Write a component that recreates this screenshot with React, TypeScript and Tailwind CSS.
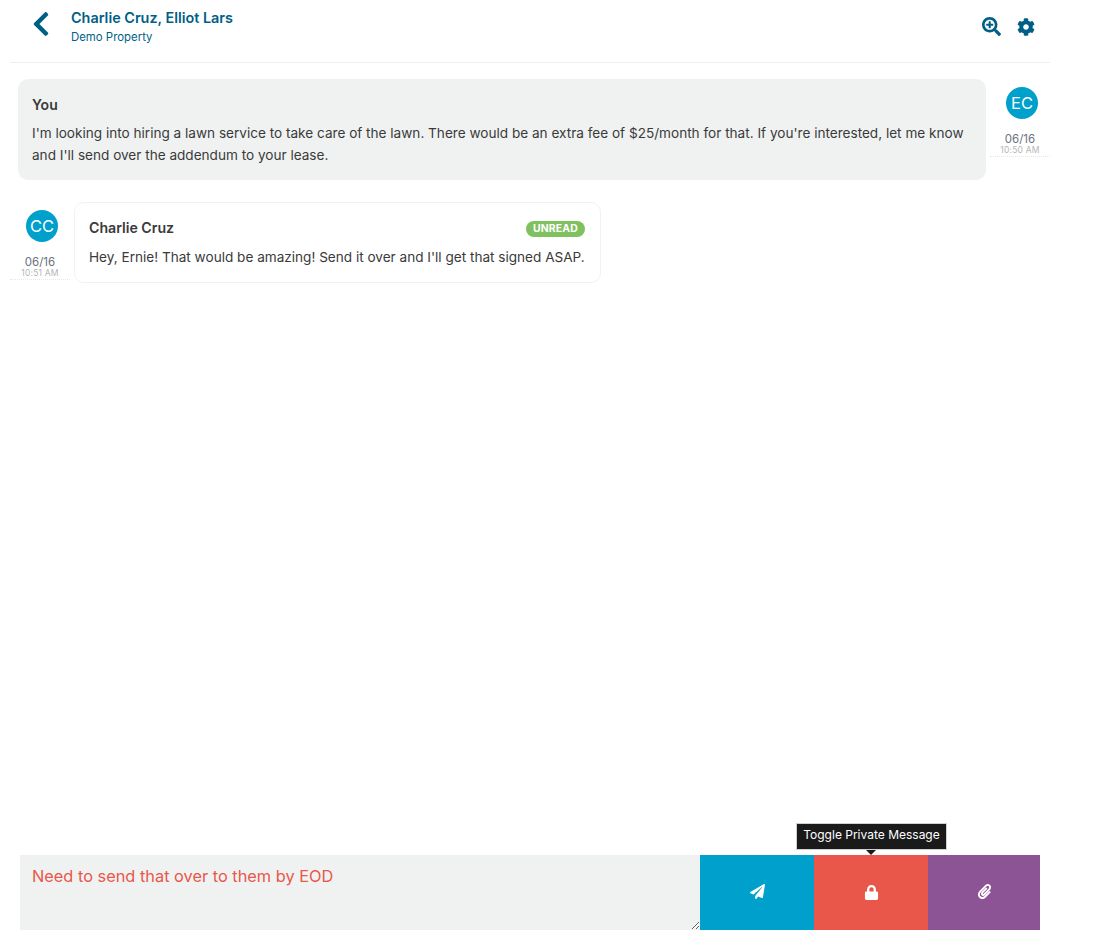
import React from "react";
import {
  FaChevronLeft,
  FaCog,
  FaLock,
  FaPaperclip,
  FaPaperPlane,
  FaSearchPlus,
} from "react-icons/fa";

const Avatar = ({ initials }: { initials: string }) => (
  <div className="w-8 h-8 ml-[4px] rounded-full bg-[#00a0cc] text-white flex items-center justify-center text-[16.5px] leading-none">
    {initials}
  </div>
);

const Stamp = ({ initials, time }: { initials: string; time: string }) => (
  <div className="w-[60px] shrink-0 flex flex-col items-center border-b border-dotted border-[#e8e8e8] h-[70px]">
    <Avatar initials={initials} />
    <p className="mt-[13px] text-[11.5px] leading-[14px] text-[#6b7280]">06/16</p>
    <p className="text-[8.5px] leading-[9px] text-[#b5b5b5] tracking-[0.2px]">{time}</p>
  </div>
);

const App = () => {
  return (
    <div className="w-[1116px] h-[946px] bg-white flex flex-col font-['Inter',sans-serif] text-[#3a3a3a] overflow-hidden">
      {/* HEADER */}
      <div className="w-[1040px] ml-[10px] h-[63px] shrink-0 border-b border-[#eeeeee] flex items-start">
        <div className="w-[61px] pl-[17px] pt-[10px] text-[#005f85]">
          <FaChevronLeft size={28} />
        </div>
        <div className="flex-1 pt-[9px]">
          <p className="text-[14.4px] leading-[17px] font-semibold text-[#005f85]">
            Charlie Cruz, Elliot Lars
          </p>
          <p className="text-[11.4px] leading-[14px] mt-[4px] text-[#005f85]">Demo Property</p>
        </div>
        <div className="flex items-center gap-[16px] pt-[17px] pr-[15px] text-[#005f85]">
          <FaSearchPlus size={19} />
          <FaCog size={18} />
        </div>
      </div>

      {/* MESSAGES */}
      <div className="flex-1 w-[1040px] ml-[10px] pt-[16px] flex flex-col">
        <div className="flex items-start">
          <div className="ml-[8px] w-[968px] h-[101px] bg-[#f0f2f2] rounded-[10px] px-[14px] pt-[17px]">
            <p className="text-[14px] leading-[18px] font-semibold">You</p>
            <p className="text-[13.58px] leading-[22px] mt-[8px]">
              I'm looking into hiring a lawn service to take care of the lawn. There would be an
              extra fee of $25/month for that. If you're interested, let me know and I'll send over
              the addendum to your lease.
            </p>
          </div>
          <div className="ml-[4px] pt-[8px]">
            <Stamp initials="EC" time="10:50 AM" />
          </div>
        </div>

        <div className="flex items-start mt-[22px]">
          <div className="pt-[8px]">
            <Stamp initials="CC" time="10:51 AM" />
          </div>
          <div className="ml-[4px] w-[527px] h-[81px] border border-[#f2f2f2] rounded-[10px] pl-[14px] pr-[15px] pt-[15px]">
            <div className="flex items-center justify-between">
              <p className="text-[14.15px] leading-[20px] font-semibold">Charlie Cruz</p>
              <span className="bg-[#7fc15e] text-white text-[10.4px] leading-[16px] font-bold rounded-full px-[7px] tracking-[0.2px] mt-[1px]">
                UNREAD
              </span>
            </div>
            <p className="text-[13.58px] leading-[22px] mt-[8px]">
              Hey, Ernie! That would be amazing! Send it over and I'll get that signed ASAP.
            </p>
          </div>
        </div>
      </div>

      {/* COMPOSER */}
      <div className="ml-[20px] mb-[16px] w-[1020px] h-[75px] shrink-0 flex">
        <textarea
          className="w-[680px] h-[75px] bg-[#f0f2f2] text-[#e9574a] text-[16.35px] leading-[22px] px-[12px] pt-[10px] outline-none"
          defaultValue="Need to send that over to them by EOD"
        />
        <button className="w-[114px] pb-[2px] bg-[#00a0cc] text-white flex items-center justify-center">
          <FaPaperPlane size={15} />
        </button>
        <button className="relative w-[114px] bg-[#e9574a] text-white flex items-center justify-center">
          <FaLock size={15} />
          <div className="absolute left-[-18px] top-[-32px] w-[151px] h-[27px] bg-[#1a1a1a] border border-[#d0d0d0] text-white text-[12px] leading-[22px] text-center whitespace-nowrap">
            Toggle Private Message
          </div>
          <div className="absolute left-[52px] top-[-5px] w-0 h-0 border-x-[5px] border-x-transparent border-t-[5px] border-t-[#1a1a1a]" />
        </button>
        <button className="w-[112px] pb-[2px] bg-[#8c5494] text-white flex items-center justify-center">
          <FaPaperclip size={15} />
        </button>
      </div>
    </div>
  );
};

export default App;
